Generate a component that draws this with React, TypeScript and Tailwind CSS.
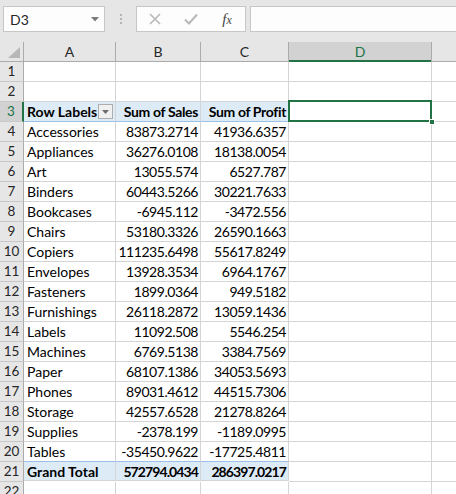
import React from "react";

const rows: [string, string, string][] = [
  ["Accessories", "83873.2714", "41936.6357"],
  ["Appliances", "36276.0108", "18138.0054"],
  ["Art", "13055.574", "6527.787"],
  ["Binders", "60443.5266", "30221.7633"],
  ["Bookcases", "-6945.112", "-3472.556"],
  ["Chairs", "53180.3326", "26590.1663"],
  ["Copiers", "111235.6498", "55617.8249"],
  ["Envelopes", "13928.3534", "6964.1767"],
  ["Fasteners", "1899.0364", "949.5182"],
  ["Furnishings", "26118.2872", "13059.1436"],
  ["Labels", "11092.508", "5546.254"],
  ["Machines", "6769.5138", "3384.7569"],
  ["Paper", "68107.1386", "34053.5693"],
  ["Phones", "89031.4612", "44515.7306"],
  ["Storage", "42557.6528", "21278.8264"],
  ["Supplies", "-2378.199", "-1189.0995"],
  ["Tables", "-35450.9622", "-17725.4811"],
];

const font = { fontFamily: "Lato, 'Noto Sans', sans-serif" };

function RowHead({ n, active }: { n: number | string; active?: boolean }) {
  return (
    <div
      className={`w-[24px] shrink-0 h-full flex items-center justify-center text-[13.5px] border-b border-b-[#c8c8c8] ${
        active
          ? "bg-[#d2d2d2] text-[#217346] border-r-2 border-r-[#217346]"
          : "bg-[#e6e6e6] text-[#262626] border-r border-r-[#ababab]"
      }`}
    >
      {n}
    </div>
  );
}

function Row({
  n,
  a,
  b,
  c,
  kind,
}: {
  n: number;
  a?: React.ReactNode;
  b?: string;
  c?: string;
  kind?: "head" | "total" | "data" | "empty";
}) {
  const isHead = kind === "head";
  const isTotal = kind === "total";
  const pivotBg = isHead || isTotal ? "bg-[#ddebf7]" : "bg-white";
  const bold = isHead || isTotal ? "font-bold" : "";
  const pivotBottom = isHead ? "border-b-[#9bc2e6]" : "border-b-[#d4d4d4]";
  const numTrack = isTotal
    ? "tracking-[-0.9px]"
    : isHead
    ? "tracking-[-0.35px]"
    : "tracking-[-0.45px]";
  const totalBorder = isTotal ? "border-t border-t-[#9bc2e6] -mt-px h-[21px]" : "";
  return (
    <div className="flex h-[20px] text-[14px] text-black">
      <RowHead n={n} active={n === 3} />
      <div
        className={`w-[92px] shrink-0 h-full border-r border-r-[#d4d4d4] border-b ${pivotBottom} ${pivotBg} ${bold} flex items-center pl-[3px] relative whitespace-nowrap ${totalBorder}`}
      >
        {a}
      </div>
      <div
        className={`w-[85px] shrink-0 h-full border-r border-r-[#d4d4d4] border-b ${pivotBottom} ${pivotBg} ${bold} ${numTrack} flex items-center justify-end pr-[2px] whitespace-nowrap ${totalBorder}`}
      >
        {b}
      </div>
      <div
        className={`w-[88px] shrink-0 h-full border-r border-r-[#d4d4d4] border-b ${pivotBottom} ${pivotBg} ${bold} ${numTrack} flex items-center justify-end pr-[2px] whitespace-nowrap ${totalBorder}`}
      >
        {c}
      </div>
      <div className="w-[143px] shrink-0 h-full border-r border-r-[#d4d4d4] border-b border-b-[#d4d4d4] bg-white" />
      <div className="flex-1 h-full border-b border-b-[#d4d4d4] bg-white" />
    </div>
  );
}

export default function App() {
  return (
    <div className="w-[456px] h-[494px] overflow-hidden bg-white relative" style={font}>
      {/* formula bar area */}
      <div className="h-[42px] bg-[#e6e6e6] flex items-start pt-[6px]">
        <div className="ml-[3px] w-[102px] h-[26px] bg-[#fdfdfd] border border-[#c6c6c6] flex items-center justify-between pl-[6px] pr-[5px] text-[14px] text-[#262626]">
          <span>D3</span>
          <svg width="8" height="5" viewBox="0 0 8 5">
            <path d="M0 0 H8 L4 4.5 Z" fill="#7a7a7a" />
          </svg>
        </div>
        <div className="w-[31px] h-[26px] flex flex-col items-center justify-center gap-[2px]">
          <span className="w-[2px] h-[2px] bg-[#b4b4b4]" />
          <span className="w-[2px] h-[2px] bg-[#b4b4b4]" />
          <span className="w-[2px] h-[2px] bg-[#b4b4b4]" />
        </div>
        <div className="w-[110px] h-[26px] bg-[#fdfdfd] border border-[#c6c6c6] flex items-center">
          <div className="w-[36px] flex justify-center">
            <svg width="12" height="12" viewBox="0 0 12 12">
              <path d="M1 1 L11 11 M11 1 L1 11" stroke="#b8b8b8" strokeWidth="1.6" />
            </svg>
          </div>
          <div className="w-[36px] flex justify-center">
            <svg width="14" height="12" viewBox="0 0 14 12">
              <path d="M1 6.5 L5 10.5 L13 1.5" stroke="#b8b8b8" strokeWidth="2" fill="none" />
            </svg>
          </div>
          <div className="w-[36px] flex justify-center">
            <span
              className="text-[15px] text-[#444] italic leading-none"
              style={{ fontFamily: "'Liberation Serif', serif" }}
            >
              f<span className="text-[12px]">x</span>
            </span>
          </div>
        </div>
        <div className="ml-[4px] flex-1 h-[26px] bg-[#fdfdfd] border border-[#c6c6c6] border-r-0" />
      </div>

      {/* column headers */}
      <div className="flex h-[20px] bg-[#e6e6e6] border-b border-b-[#ababab] text-[14px] text-[#262626]">
        <div className="w-[24px] shrink-0 border-r border-r-[#ababab] relative">
          <svg className="absolute left-[8px] top-[5px]" width="12" height="11" viewBox="0 0 12 11">
            <path d="M12 0 V11 H0 Z" fill="#b7b7b7" />
          </svg>
        </div>
        <div className="w-[92px] shrink-0 border-r border-r-[#ababab] flex items-center justify-center">A</div>
        <div className="w-[85px] shrink-0 border-r border-r-[#ababab] flex items-center justify-center">B</div>
        <div className="w-[88px] shrink-0 border-r border-r-[#ababab] flex items-center justify-center">C</div>
        <div className="w-[143px] shrink-0 border-r border-r-[#ababab] bg-[#d2d2d2] text-[#217346] flex items-center justify-center relative">
          D
          <div className="absolute left-0 right-0 -bottom-px h-[2px] bg-[#217346]" />
        </div>
        <div className="flex-1" />
      </div>

      <Row n={1} />
      <Row n={2} />
      <Row
        n={3}
        kind="head"
        a={
          <>
            <span>Row Labels</span>
            <span className="absolute right-[2px] top-[2px] w-[15px] h-[15px] border border-[#adadad] bg-[#f0f0f0] flex items-center justify-center">
              <svg width="7" height="4" viewBox="0 0 7 4">
                <path d="M0 0 H7 L3.5 4 Z" fill="#6d6d6d" />
              </svg>
            </span>
          </>
        }
        b="Sum of Sales"
        c="Sum of Profit"
      />
      {rows.map((r, i) => (
        <Row key={r[0]} n={i + 4} a={r[0]} b={r[1]} c={r[2]} />
      ))}
      <Row n={21} kind="total" a="Grand Total" b="572794.0434" c="286397.0217" />
      <Row n={22} />

      {/* selection D3 */}
      <div className="absolute left-[288px] top-[100px] w-[144px] h-[22px] border-2 border-[#217346] pointer-events-none" />
      <div className="absolute left-[429px] top-[119px] w-[6px] h-[6px] bg-[#217346] border border-white" />
    </div>
  );
}
